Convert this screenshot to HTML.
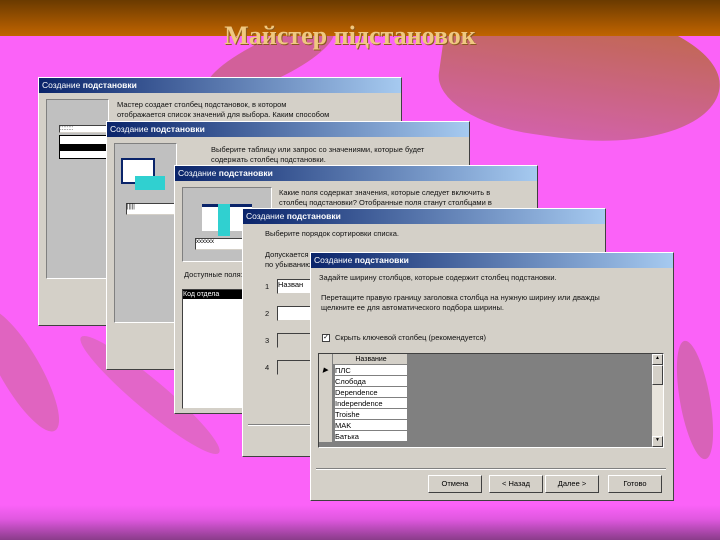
<!DOCTYPE html>
<html><head><meta charset="utf-8"><style>
*{margin:0;padding:0;box-sizing:border-box}
body{width:720px;height:540px;overflow:hidden;position:relative;background:#fb62f8;font-family:"Liberation Sans",sans-serif;font-size:8px;color:#000}
.a{position:absolute}
.top{left:0;top:0;width:720px;height:36px;background:linear-gradient(#6a3a00,#a85800 70%,#c06400)}
.bot{left:0;top:505px;width:720px;height:35px;background:linear-gradient(#fb62f8,#e058e0 40%,#8a3c8a)}
.leaf{position:absolute;border-radius:50%}
h1{position:absolute;left:0;width:700px;top:21px;text-align:center;font-family:"Liberation Serif",serif;font-weight:bold;font-size:26px;color:#f0c880;text-shadow:1px 1px 0 #8a5a20}
.w{position:absolute;width:364px;background:#d4d0c8;border:1px solid #fff;border-right-color:#404040;border-bottom-color:#404040;overflow:hidden}
.tb{height:15px;background:linear-gradient(90deg,#0a246a,#a6caf0);color:#fff;font-size:8.5px;line-height:15px;padding-left:3px;white-space:nowrap}
.tb b{font-weight:bold}
.t{position:absolute;font-size:7.5px;line-height:10px;color:#111;white-space:nowrap}
.pn{position:absolute;background:#c0c0c0;border:1px solid #808080;border-right-color:#fff;border-bottom-color:#fff}
.wh{position:absolute;background:#fff;border:1px solid #404040;border-right-color:#d4d0c8;border-bottom-color:#d4d0c8}
.btn{position:absolute;top:222px;height:18px;width:54px;border:1px solid #fff;border-right-color:#404040;border-bottom-color:#404040;text-align:center;font-size:7.5px;line-height:16px}
.row{position:absolute;left:0;width:88px;height:11px;border-bottom:1px solid #808080}
.row i{position:absolute;left:0;top:0;width:14px;height:11px;background:#d4d0c8;border-right:1px solid #808080}
.row span{position:absolute;left:16px;top:0;font-size:7.5px;line-height:11px;background:#fff;width:72px;height:10px}
</style></head><body>
<div class="leaf" style="left:440px;top:10px;width:280px;height:130px;background:linear-gradient(#c0684c,#d262a8);border-radius:40% 50% 60% 40%;transform:rotate(8deg)"></div>
<div class="leaf" style="left:200px;top:40px;width:140px;height:40px;background:#d2609a;transform:rotate(-25deg)"></div>
<div class="leaf" style="left:0px;top:300px;width:40px;height:140px;background:#e064c0;transform:rotate(-30deg)"></div>
<div class="leaf" style="left:60px;top:380px;width:180px;height:30px;background:#e266c8;transform:rotate(40deg)"></div>
<div class="leaf" style="left:680px;top:340px;width:30px;height:120px;background:#d862b8;transform:rotate(-10deg)"></div>
<div class="a top"></div>
<div class="a bot"></div>
<h1>Майстер підстановок</h1>

<div class="w" style="left:38px;top:77px;height:249px">
<div class="tb">Создание <b>подстановки</b></div>
<div class="pn" style="left:7px;top:21px;width:63px;height:180px"></div>
<div class="wh" style="left:20px;top:47px;width:50px;height:8px;font-size:6px">::::::::</div>
<div class="a" style="left:20px;top:57px;width:50px;height:24px;background:#fff;border:1px solid #000"><div style="height:6px"></div><div style="background:#000;height:7px;margin-top:2px"></div></div>
<div class="t" style="left:78px;top:22px">Мастер создает столбец подстановок, в котором<br>отображается список значений для выбора. Каким способом</div>
</div>

<div class="w" style="left:106px;top:121px;height:249px">
<div class="tb">Создание <b>подстановки</b></div>
<div class="pn" style="left:7px;top:21px;width:63px;height:180px"></div>
<div class="a" style="left:14px;top:36px;width:34px;height:26px;background:#fff;border:2px solid #0a246a"></div>
<div class="a" style="left:28px;top:54px;width:30px;height:14px;background:#30d0d0"></div>
<div class="wh" style="left:19px;top:81px;width:52px;height:12px;font-size:6px">|||||</div>
<div class="t" style="left:104px;top:23px">Выберите таблицу или запрос со значениями, которые будет<br>содержать столбец подстановки.</div>
</div>

<div class="w" style="left:174px;top:165px;height:249px">
<div class="tb">Создание <b>подстановки</b></div>
<div class="pn" style="left:7px;top:21px;width:90px;height:75px"></div>
<div class="a" style="left:27px;top:38px;width:50px;height:27px;background:#fff;border-top:3px solid #0a246a"></div>
<div class="a" style="left:43px;top:38px;width:12px;height:32px;background:#30d0d0"></div>
<div class="wh" style="left:20px;top:72px;width:52px;height:12px;font-size:6px">xxxxxx</div>
<div class="t" style="left:104px;top:22px">Какие поля содержат значения, которые следует включить в<br>столбец подстановки? Отобранные поля станут столбцами в</div>
<div class="t" style="left:9px;top:104px">Доступные поля:</div>
<div class="wh" style="left:7px;top:123px;width:62px;height:120px"><div style="background:#000;color:#fff;height:9px;font-size:7px;line-height:9px">Код отдела</div></div>
</div>

<div class="w" style="left:242px;top:208px;height:249px">
<div class="tb">Создание <b>подстановки</b></div>
<div class="t" style="left:22px;top:20px">Выберите порядок сортировки списка.</div>
<div class="t" style="left:22px;top:41px">Допускается<br>по убыванию</div>
<div class="t" style="left:22px;top:73px">1</div><div class="wh" style="left:34px;top:70px;width:40px;height:15px;font-size:7.5px">Назван</div>
<div class="t" style="left:22px;top:100px">2</div><div class="wh" style="left:34px;top:97px;width:40px;height:15px"></div>
<div class="t" style="left:22px;top:127px">3</div><div class="wh" style="left:34px;top:124px;width:40px;height:15px;background:#d4d0c8"></div>
<div class="t" style="left:22px;top:154px">4</div><div class="wh" style="left:34px;top:151px;width:40px;height:15px;background:#d4d0c8"></div>
<div class="a" style="left:5px;top:215px;width:350px;height:2px;border-top:1px solid #808080;border-bottom:1px solid #fff"></div>
</div>

<div class="w" style="left:310px;top:252px;height:249px">
<div class="tb">Создание <b>подстановки</b></div>
<div class="t" style="left:8px;top:20px">Задайте ширину столбцов, которые содержит столбец подстановки.</div>
<div class="t" style="left:10px;top:40px">Перетащите правую границу заголовка столбца на нужную ширину или дважды<br>щелкните ее для автоматического подбора ширины.</div>
<div class="a" style="left:11px;top:81px;width:8px;height:8px;background:#fff;border:1px solid #404040;font-size:7px;line-height:6px;text-align:center">✓</div>
<div class="t" style="left:24px;top:80px">Скрыть ключевой столбец (рекомендуется)</div>
<div class="a" style="left:7px;top:100px;width:346px;height:95px;background:#808080;border:1px solid #404040;border-right-color:#fff;border-bottom-color:#fff">
 <div class="row" style="top:0;background:#d4d0c8"><i></i><span style="background:#d4d0c8;text-align:center;font-size:7px">Название</span></div>
 <div class="row" style="top:11px"><i style="font-size:7px;line-height:11px;text-align:center">▶</i><span>ПЛС</span></div>
 <div class="row" style="top:22px"><i></i><span>Слобода</span></div>
 <div class="row" style="top:33px"><i></i><span>Dependence</span></div>
 <div class="row" style="top:44px"><i></i><span>Independence</span></div>
 <div class="row" style="top:55px"><i></i><span>Troishe</span></div>
 <div class="row" style="top:66px"><i></i><span>MAK</span></div>
 <div class="row" style="top:77px"><i></i><span>Батька</span></div>
 <div class="a" style="left:333px;top:0;width:11px;height:93px;background:#e8e4dc"><div style="height:11px;background:#d4d0c8;border:1px solid #fff;border-right-color:#404040;border-bottom-color:#404040;font-size:5px;text-align:center">▲</div><div style="height:20px;background:#d4d0c8;border:1px solid #fff;border-right-color:#404040;border-bottom-color:#404040"></div><div style="position:absolute;bottom:0;width:11px;height:11px;background:#d4d0c8;border:1px solid #fff;border-right-color:#404040;border-bottom-color:#404040;font-size:5px;text-align:center">▼</div></div>
</div>
<div class="a" style="left:5px;top:215px;width:350px;height:2px;border-top:1px solid #808080;border-bottom:1px solid #fff"></div>
<div class="btn" style="left:117px">Отмена</div>
<div class="btn" style="left:178px">&lt; Назад</div>
<div class="btn" style="left:234px">Далее &gt;</div>
<div class="btn" style="left:297px">Готово</div>
</div>
</body></html>
